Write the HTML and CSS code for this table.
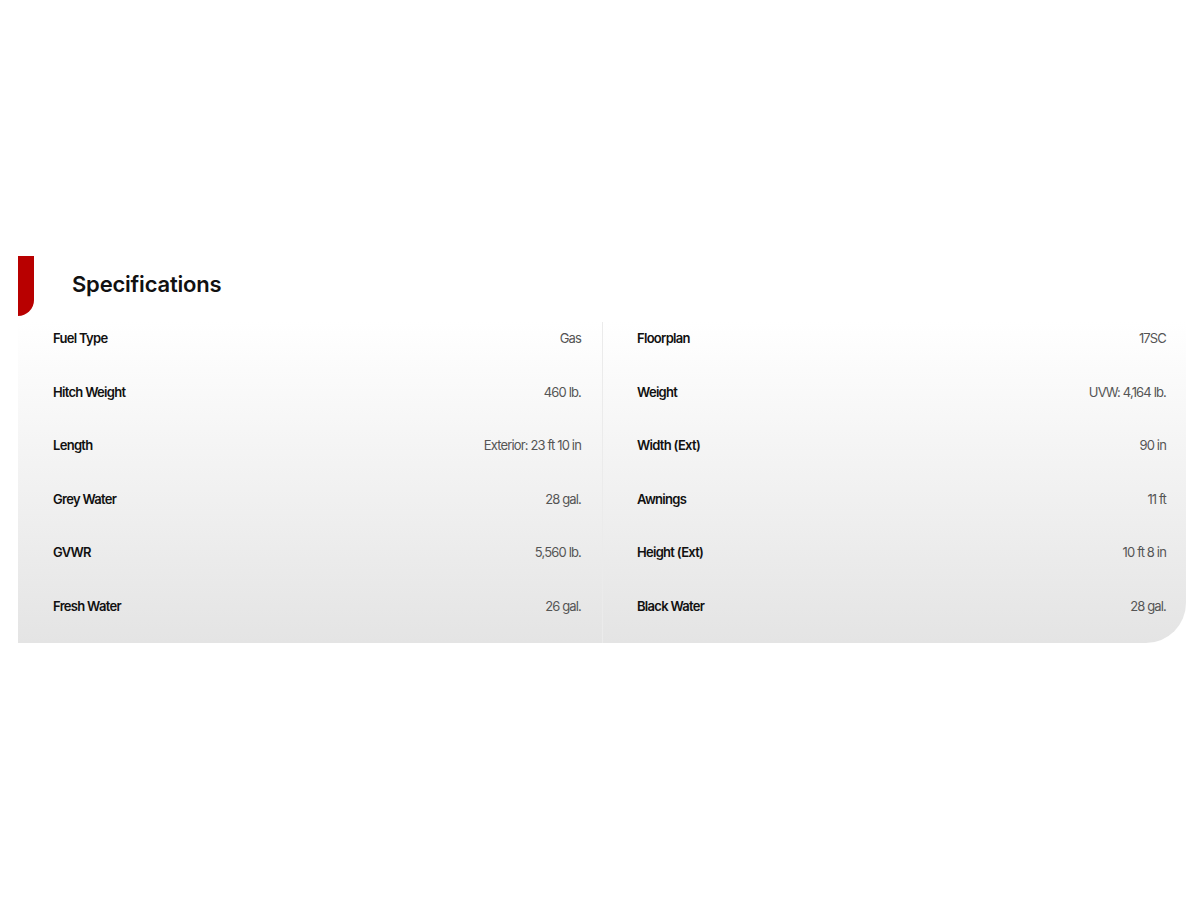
FILE: index.html
```html
<!DOCTYPE html>
<html lang="en">
<head>
    <meta charset="UTF-8">
    <title>Specifications</title>
    <link rel="stylesheet" href="styles.css">
</head>
<body>
    <section class="specs">
        <div class="specs-head">
            <span class="specs-mark"></span>
            <h2>Specifications</h2>
        </div>
        <div class="specs-panel">
            <div class="specs-col">
                <div class="spec-row"><span class="spec-label">Fuel Type</span><span class="spec-value">Gas</span></div>
                <div class="spec-row"><span class="spec-label">Hitch Weight</span><span class="spec-value">460 lb.</span></div>
                <div class="spec-row"><span class="spec-label">Length</span><span class="spec-value">Exterior: 23 ft 10 in</span></div>
                <div class="spec-row"><span class="spec-label">Grey Water</span><span class="spec-value">28 gal.</span></div>
                <div class="spec-row"><span class="spec-label">GVWR</span><span class="spec-value">5,560 lb.</span></div>
                <div class="spec-row"><span class="spec-label">Fresh Water</span><span class="spec-value">26 gal.</span></div>
            </div>
            <div class="specs-col">
                <div class="spec-row"><span class="spec-label">Floorplan</span><span class="spec-value">17SC</span></div>
                <div class="spec-row"><span class="spec-label">Weight</span><span class="spec-value">UVW: 4,164 lb.</span></div>
                <div class="spec-row"><span class="spec-label">Width (Ext)</span><span class="spec-value">90 in</span></div>
                <div class="spec-row"><span class="spec-label">Awnings</span><span class="spec-value">11 ft</span></div>
                <div class="spec-row"><span class="spec-label">Height (Ext)</span><span class="spec-value">10 ft 8 in</span></div>
                <div class="spec-row"><span class="spec-label">Black Water</span><span class="spec-value">28 gal.</span></div>
            </div>
        </div>
    </section>
</body>
</html>
```

FILE: styles.css
```css
body {
    margin: 0;
    background-color: #fff;
    font-family: 'Inter', 'Liberation Sans', sans-serif;
    color: #111;
}

.specs {
    padding: 256px 14px 0 18px;
}

.specs-head {
    display: flex;
    align-items: center;
    height: 60px;
}

.specs-mark {
    width: 16px;
    height: 60px;
    background-color: #b80000;
    border-bottom-right-radius: 16px;
}

.specs-head h2 {
    margin: 0 0 0 38px;
    font-size: 22px;
    font-weight: 600;
    letter-spacing: -0.2px;
    color: #111;
    padding-bottom: 5px;
}

.specs-panel {
    margin-top: 6px;
    display: grid;
    grid-template-columns: 1fr 1fr;
    background: linear-gradient(to bottom, #ffffff 0%, #e4e4e4 100%);
    border-bottom-right-radius: 40px;
}

.specs-col + .specs-col {
    border-left: 1px solid #ebebeb;
}

.spec-row {
    display: flex;
    justify-content: space-between;
    align-items: flex-start;
    height: 53.5px;
    box-sizing: border-box;
    padding: 8px 21px 0 35px;
    font-size: 13px;
    line-height: 16px;
}

.specs-col + .specs-col .spec-row {
    padding: 8px 20px 0 34px;
}

.spec-label {
    font-weight: 600;
    color: #111;
    letter-spacing: -0.7px;
}

.spec-value {
    color: #555;
    letter-spacing: -0.85px;
}
```
